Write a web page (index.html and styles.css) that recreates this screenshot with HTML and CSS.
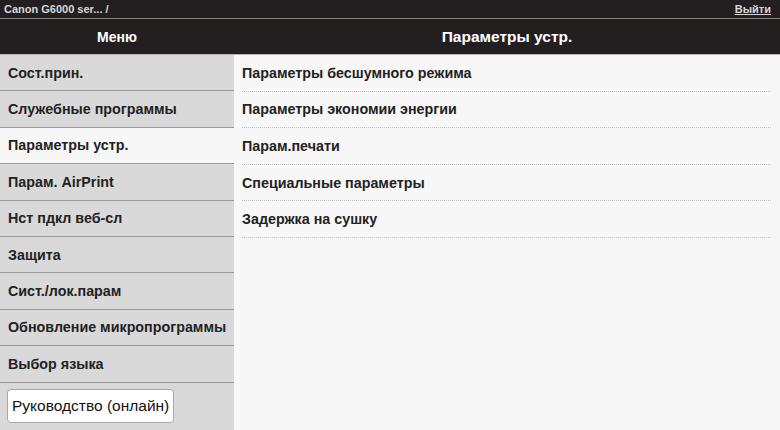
FILE: index.html
```html
<!DOCTYPE html>
<html lang="ru">
<head>
    <meta charset="UTF-8">
    <title>Параметры устр.</title>
    <link rel="stylesheet" href="styles.css">
</head>
<body>
    <div class="topbar">
        <span class="model">Canon G6000 ser... /</span>
        <a href="#" class="logout">Выйти</a>
    </div>

    <div class="header">
        <div class="header-menu">Меню</div>
        <div class="header-title">Параметры устр.</div>
    </div>

    <div class="main">
        <!-- Left menu -->
        <div class="sidebar">
            <div class="menu-item">Сост.прин.</div>
            <div class="menu-item">Служебные программы</div>
            <div class="menu-item active">Параметры устр.</div>
            <div class="menu-item">Парам. AirPrint</div>
            <div class="menu-item">Нст пдкл веб-сл</div>
            <div class="menu-item">Защита</div>
            <div class="menu-item">Сист./лок.парам</div>
            <div class="menu-item">Обновление микропрограммы</div>
            <div class="menu-item">Выбор языка</div>
            <div class="manual">
                <button class="manual-button">Руководство (онлайн)</button>
            </div>
        </div>

        <!-- Settings list -->
        <div class="content">
            <div class="setting">Параметры бесшумного режима</div>
            <div class="setting">Параметры экономии энергии</div>
            <div class="setting">Парам.печати</div>
            <div class="setting">Специальные параметры</div>
            <div class="setting">Задержка на сушку</div>
        </div>
    </div>
</body>
</html>
```

FILE: styles.css
```css
body {
    font-family: Arial, "Liberation Sans", sans-serif;
    margin: 0;
    padding: 0;
    width: 780px;
    height: 430px;
    overflow: hidden;
    background: #f7f7f7;
    color: #222;
}
.topbar {
    display: flex;
    justify-content: space-between;
    align-items: center;
    height: 18px;
    padding: 0 9px 0 4px;
    background: #231f20;
    border-bottom: 1px solid #7d8a7a;
    font-size: 11px;
    font-weight: bold;
}
.model {
    color: #d8d8d8;
}
.logout {
    color: #d8d8d8;
    text-decoration: underline;
}
.header {
    display: flex;
    height: 35px;
    background: #231f20;
    border-bottom: 1px solid #b5b5b5;
    color: #fff;
    font-weight: bold;
}
.header-menu {
    width: 234px;
    display: flex;
    justify-content: center;
    align-items: center;
    font-size: 14px;
}
.header-title {
    flex: 1;
    display: flex;
    justify-content: center;
    align-items: center;
    font-size: 15.5px;
}
.main {
    display: flex;
}
.sidebar {
    width: 234px;
    background: #d9d9d9;
    height: 376px;
}
.menu-item {
    height: 35.4px;
    display: flex;
    align-items: center;
    padding-left: 8px;
    font-size: 14.3px;
    font-weight: bold;
    border-bottom: 1px solid #9c9c9c;
}
.menu-item.active {
    background: #f7f7f7;
}
.manual {
    padding: 6px 0 0 7px;
}
.manual-button {
    font-family: Arial, "Liberation Sans", sans-serif;
    font-size: 15.5px;
    color: #111;
    background: #fff;
    border: 1px solid #a8a8a8;
    border-radius: 4px;
    height: 34px;
    padding: 0 4px;
}
.content {
    flex: 1;
    padding: 0 9px 0 8px;
}
.setting {
    height: 35.6px;
    display: flex;
    align-items: center;
    font-size: 14.3px;
    font-weight: bold;
    border-bottom: 1px dotted #c4c4c4;
}
```
